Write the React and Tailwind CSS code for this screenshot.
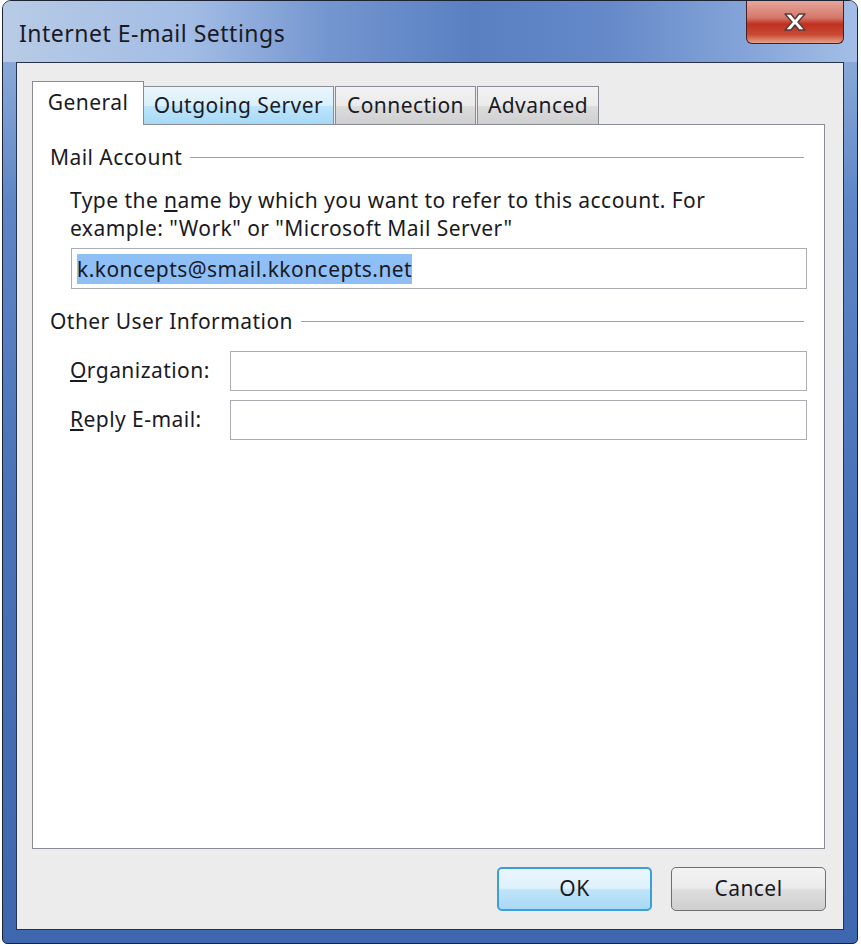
import { useState } from "react";

const font = { fontFamily: '"Noto Sans", "Open Sans", sans-serif' };

export default function App() {
  return (
    <div className="w-[861px] h-[946px] bg-white relative" style={font}>
      <div className="absolute left-[2px] top-0 w-[856px] h-[944px] rounded-t-[9px] rounded-b-[5px] border border-[#1c2433] bg-[linear-gradient(180deg,#a7c0e4_0px,#8aa9d9_60px,#5e86c6_200px,#4a72b8_500px,#3f67b0_944px)] flex flex-col overflow-hidden">
        <TitleBar />
        <div className="flex-1 px-[13px] pb-[13px] flex">
          <div className="flex-1 border border-[#26334a] bg-[#ececec] flex flex-col tracking-[0.45px]">
            <Tabs />
            <div className="flex justify-end gap-[19px] mt-[18px] mr-[17px]">
              <WinButton label="OK" primary />
              <WinButton label="Cancel" />
            </div>
          </div>
        </div>
      </div>
    </div>
  );
}

const TitleBar = () => {
  return (
    <div className="h-[61px] flex items-start relative bg-[linear-gradient(90deg,#b8cbe6_0%,#a2bce4_22%,#7496d0_38%,#5a80c2_55%,#6488c8_70%,#86a6da_88%,#a4bfe6_100%)]">
      <div className="text-[23px] tracking-[0.5px] text-[#1a1a24] pl-[16px] pt-[15px] leading-[34px]">
        Internet E-mail Settings
      </div>
      <div className="ml-auto mr-[13px] w-[98px] h-[43px] rounded-b-[6px] border border-[#4a1f1f] border-t-0 bg-[linear-gradient(180deg,#e8a69b_0%,#d4776a_40%,#c0301f_55%,#c84a35_80%,#e6a08a_100%)] flex items-center justify-center">
        <svg width="30" height="22" viewBox="0 0 30 22">
          <path
            d="M5 3 L11 3 L15 8 L19 3 L25 3 L18 11 L25 19 L19 19 L15 14 L11 19 L5 19 L12 11 Z"
            fill="#ffffff"
            stroke="#5a3a3a"
            strokeWidth="1.5"
            strokeLinejoin="round"
          />
        </svg>
      </div>
    </div>
  );
};

const Tab = ({ label, active, hover, width }) => {
  if (active) {
    return (
      <div
        className="h-[44px] -mb-[1px] bg-white border border-[#898c95] border-b-0 z-10 flex items-start justify-center pt-[5px] text-[21px] text-[#1a1a24] relative"
        style={{ width }}
      >
        {label}
      </div>
    );
  }
  return (
    <div
      className={
        "h-[38px] mt-[5px] border border-[#898c95] border-b-0 -ml-[1px] flex items-center justify-center text-[21px] text-[#1a1a24] " +
        (hover
          ? "bg-[linear-gradient(180deg,#eaf6fd_0%,#d9f0fc_50%,#bee6fd_50%,#a7d9f5_100%)] border-[#3c7fb1]"
          : "bg-[linear-gradient(180deg,#f2f2f2_0%,#ebebeb_50%,#dddddd_50%,#cfcfcf_100%)]")
      }
      style={{ width }}
    >
      {label}
    </div>
  );
};

const Tabs = () => {
  return (
    <div className="ml-[15px] mr-[18px] mt-[18px] flex flex-col">
      <div className="flex items-end pl-0">
        <Tab label="General" active width={112} />
        <Tab label="Outgoing Server" hover width={191} />
        <div className="w-[2px]" />
        <Tab label="Connection" width={141} />
        <div className="w-[2px]" />
        <Tab label="Advanced" width={122} />
      </div>
      <div className="h-[725px] bg-white border border-[#898c95] px-[17px] pt-[19px] text-[21px] text-[#1a1a24]">
        <GroupHeader label="Mail Account" />
        <div className="pl-[20px] mt-[14px] leading-[28px]">
          Type the <u className="underline-offset-2">n</u>ame by which you want to refer to this account. For
          <br />
          example: "Work" or "Microsoft Mail Server"
        </div>
        <div className="ml-[21px] mt-[6px] h-[41px] border border-[#abadb3] flex items-center px-[5px]">
          <span className="bg-[#8ebff7] leading-[30px]">k.koncepts@smail.kkoncepts.net</span>
        </div>
        <div className="mt-[19px]">
          <GroupHeader label="Other User Information" />
        </div>
        <div className="mt-[15px] flex flex-col gap-[9px] pl-[20px]">
          <FieldRow accel="O" rest="rganization:" />
          <FieldRow accel="R" rest="eply E-mail:" />
        </div>
      </div>
    </div>
  );
};

const GroupHeader = ({ label }) => {
  return (
    <div className="flex items-center h-[28px] pr-[3px]">
      <span className="whitespace-nowrap">{label}</span>
      <div className="flex-1 ml-[8px] h-[2px] border-t border-[#a0a0a0] border-b border-b-white" />
    </div>
  );
};

const FieldRow = ({ accel, rest }) => {
  return (
    <div className="flex items-center">
      <div className="w-[160px] whitespace-nowrap">
        <u className="underline-offset-2">{accel}</u>
        {rest}
      </div>
      <input className="flex-1 h-[40px] border border-[#abadb3] bg-white outline-none" />
    </div>
  );
};

const WinButton = ({ label, primary }) => {
  const [down, setDown] = useState(false);
  return (
    <button
      onMouseDown={() => setDown(true)}
      onMouseUp={() => setDown(false)}
      className={
        "w-[155px] h-[44px] rounded-[5px] text-[21px] text-[#1a1a24] flex items-center justify-center " +
        (primary
          ? "border-2 border-[#3c9fd9] bg-[linear-gradient(180deg,#e9f6fd_0%,#dff1fc_48%,#bfe4f8_52%,#a9d9f4_100%)]"
          : "border border-[#707070] bg-[linear-gradient(180deg,#f3f3f3_0%,#ebebeb_48%,#dddddd_52%,#cfcfcf_100%)]") +
        (down ? " brightness-95" : "")
      }
    >
      {label}
    </button>
  );
};
